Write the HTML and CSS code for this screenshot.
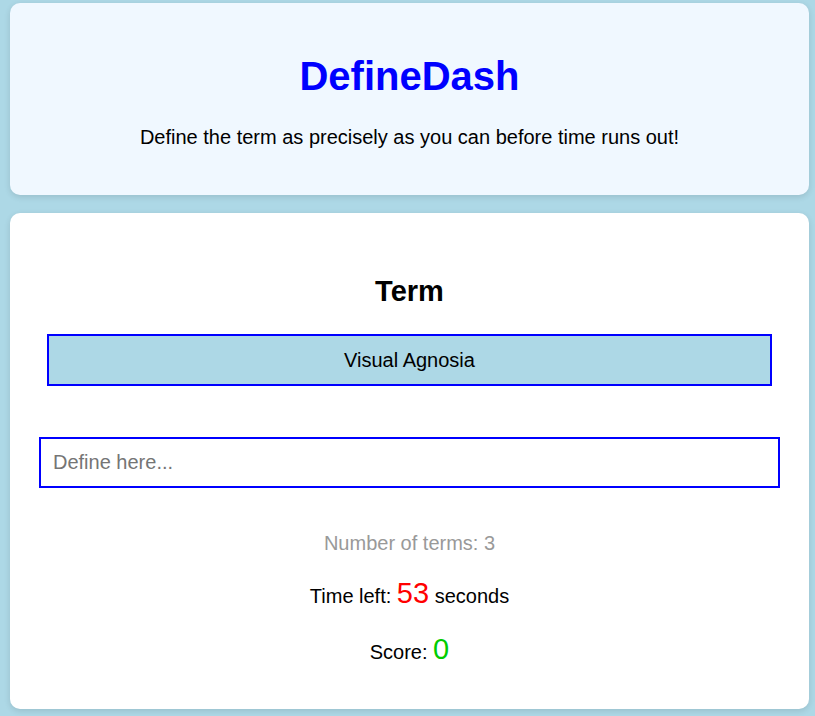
FILE: index.html
```html
<!DOCTYPE html>
<html>
<head>
<meta charset="utf-8">
<link rel="stylesheet" href="styles.css">
</head>
<body>
<div class="page">
  <header class="card header">
    <h1 class="title">DefineDash</h1>
    <p class="subtitle">Define the term as precisely as you can before time runs out!</p>
  </header>
  <main class="card game">
    <h2 class="term-label">Term</h2>
    <div class="term-box">Visual Agnosia</div>
    <input class="answer" type="text" placeholder="Define here...">
    <p class="count">Number of terms: 3</p>
    <p class="stat">Time left: <span class="time">53</span> seconds</p>
    <p class="stat score-line">Score: <span class="score">0</span></p>
  </main>
</div>
</body>
</html>
```

FILE: styles.css
```css
html, body {
  margin: 0;
  padding: 0;
  background: #add8e6;
  font-family: "Liberation Sans", Arial, sans-serif;
  color: #000;
}
.page {
  padding: 3px 6px 10px 10px;
  display: flex;
  flex-direction: column;
  gap: 18px;
}
.card {
  border-radius: 10px;
  box-shadow: 0 2px 6px rgba(0, 0, 0, 0.12);
  text-align: center;
}
.header {
  background: #f0f8ff;
  height: 192px;
  box-sizing: border-box;
  padding-top: 50px;
}
.title {
  margin: 0;
  font-size: 40px;
  line-height: 46px;
  color: #0000ff;
  font-weight: bold;
}
.subtitle {
  margin: 27px 0 0;
  font-size: 20px;
  line-height: 23px;
}
.game {
  background: #fff;
  height: 496px;
  box-sizing: border-box;
  padding: 61px 29px 0;
  display: flex;
  flex-direction: column;
}
.term-label {
  margin: 0;
  font-size: 29px;
  line-height: 34px;
  font-weight: bold;
}
.term-box {
  margin: 26px 8px 0;
  border: 2px solid #0000ff;
  background: #add8e6;
  font-size: 20px;
  line-height: 23px;
  padding: 12.5px 0;
}
.answer {
  margin: 51px 0 0;
  border: 2px solid #0000ff;
  font-family: "Liberation Sans", Arial, sans-serif;
  font-size: 20px;
  line-height: 23px;
  padding: 12px 12px;
  outline: none;
  color: #000;
}
.answer::placeholder {
  color: #757575;
}
.count {
  margin: 44px 0 0;
  font-size: 20px;
  line-height: 23px;
  color: #999;
}
.stat {
  margin: 22px 0 0;
  font-size: 20px;
  line-height: 32px;
}
.score-line {
  margin-top: 21px;
}
.time {
  color: #ff0000;
  font-size: 29px;
}
.score {
  color: #00cc00;
  font-size: 29px;
}
```
